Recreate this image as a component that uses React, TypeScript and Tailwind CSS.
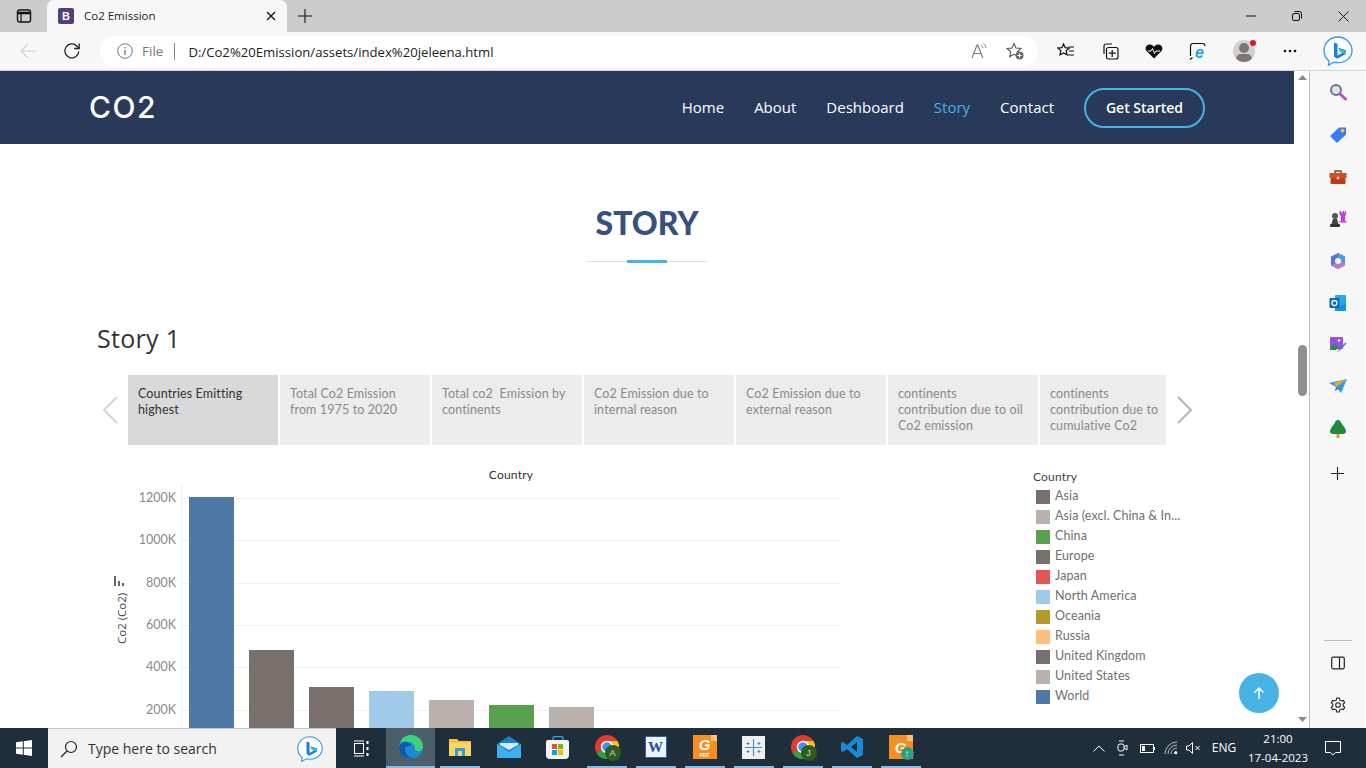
import React from "react";

const sans = "font-['Open_Sans','Liberation_Sans',sans-serif]";
const tableau = "font-['Lato','Open_Sans',sans-serif]";

function Svg({ s = 20, w, h, children, vb }: { s?: number; w?: number; h?: number; children: React.ReactNode; vb?: string }) {
  const W = w ?? s;
  const H = h ?? s;
  return (
    <svg width={W} height={H} viewBox={vb ?? `0 0 ${W} ${H}`} fill="none" className="block shrink-0">
      {children}
    </svg>
  );
}

const BingIcon = ({ s = 32 }: { s?: number }) => (
  <svg width={s} height={s} viewBox="0 0 32 32" fill="none" className="block shrink-0">
    <path d="M16 2C8 2 2 8 2 15.500c0 4.500 2 8 5 10.500L6.500 30l5.500-2.800c1.300.3 2.600.5 4 .5 8 0 14-5.500 14-12.200S24 2 16 2z" fill="#fff" stroke="#2f9be8" strokeWidth="1.300" />
    <path d="M12 7.500l3.500 1.200v11.800l5-2.800-2.500-1.200-1.500-3.700 7.500 2.500v3.500l-8.500 5-3.500-2z" fill="#1c7fe0" />
    <path d="M16.500 13.800l7.500 2.500v3.500l-5-3z" fill="#2bc7d8" />
  </svg>
);

function TabBar() {
  return (
    <div className="h-8 bg-[#cccccc] flex items-end shrink-0">
      <div className="w-[47px] h-8 flex items-center justify-center">
        <Svg s={16}>
          <rect x="1.500" y="2" width="13" height="12" rx="2" stroke="#111" strokeWidth="1.400" />
          <path d="M2 5h12" stroke="#111" strokeWidth="2.500" />
          <path d="M5 5v9" stroke="#111" strokeWidth="1.200" />
        </Svg>
      </div>
      <div className="w-[240px] h-8 bg-[#f7f7f7] rounded-t-[7px] flex items-center pl-[11px] pr-[11px]">
        <div className="w-4 h-4 rounded-[2px] bg-[#563d7c] text-white text-[11px] font-bold leading-4 text-center font-['Liberation_Sans',sans-serif]">B</div>
        <span className={`ml-[10px] text-[11.500px] text-[#222] ${sans}`}>Co2 Emission</span>
        <div className="ml-auto">
          <Svg s={10}>
            <path d="M1 1l8 8M9 1l-8 8" stroke="#111" strokeWidth="1.300" />
          </Svg>
        </div>
      </div>
      <div className="h-8 w-[36px] flex items-center justify-center">
        <Svg s={14}>
          <path d="M7 0v14M0 7h14" stroke="#111" strokeWidth="1.100" />
        </Svg>
      </div>
      <div className="ml-auto flex h-8">
        <div className="w-[46px] flex items-center justify-center">
          <Svg w={10} h={2}>
            <path d="M0 1h10" stroke="#111" />
          </Svg>
        </div>
        <div className="w-[46px] flex items-center justify-center">
          <Svg s={10}>
            <rect x=".5" y="2.500" width="7" height="7" rx="1.500" stroke="#111" />
            <path d="M2.500 .5h5a2 2 0 012 2v5" stroke="#111" />
          </Svg>
        </div>
        <div className="w-[46px] flex items-center justify-center">
          <Svg s={11}>
            <path d="M.5.5l10 10M10.500.5l-10 10" stroke="#111" />
          </Svg>
        </div>
      </div>
    </div>
  );
}

function ToolBar() {
  return (
    <div className="h-[39px] bg-[#f7f7f7] border-b border-[#d4d4d4] flex items-center shrink-0">
      <div className="w-[56px] flex justify-center">
        <Svg w={18} h={16}>
          <path d="M17 8H2M8.500 1.500L2 8l6.500 6.500" stroke="#cfcfcf" strokeWidth="1.200" />
        </Svg>
      </div>
      <div className="w-[32px] flex justify-center">
        <Svg s={18}>
          <path d="M15.800 9.500a7 7 0 11-2-5.500L16 6.200" stroke="#222" strokeWidth="1.300" />
          <path d="M16.200 1.500v5h-5" stroke="#222" strokeWidth="1.300" />
        </Svg>
      </div>
      <div className="ml-[12px] w-[938px] h-[31px] bg-white rounded-full flex items-center pl-[17px] pr-[14px]">
        <Svg s={16}>
          <circle cx="8" cy="8" r="7.300" stroke="#777" strokeWidth="1" />
          <path d="M8 7v5M8 4v1.600" stroke="#777" strokeWidth="1.300" />
        </Svg>
        <span className={`ml-[9px] text-[13.500px] text-[#777] ${sans}`}>File</span>
        <div className="ml-[11px] w-px h-[17px] bg-[#888]" />
        <span className={`ml-[13px] text-[13.150px] leading-[20px] pt-[1px] text-[#222] ${sans}`}>D:/Co2%20Emission/assets/index%20jeleena.html</span>
        <div className="ml-auto flex items-center gap-[19px]">
          <Svg w={16} h={16}>
            <path d="M1 15L6 2h.8l5 13M3 10.500h7" stroke="#777" strokeWidth="1.100" />
            <path d="M10 2a4 4 0 012 3M12.500.5a6 6 0 012.500 4.500" stroke="#777" strokeWidth=".9" />
          </Svg>
          <Svg s={18}>
            <path d="M8 1.500l2 4.500 5 .5-3.700 3.300 1 4.800L8 12.300 3.700 14.600l1-4.800L1 6.500l5-.5z" stroke="#555" strokeWidth="1.100" />
            <circle cx="13.500" cy="13.500" r="4" fill="#666" />
            <path d="M13.500 11.300v4.400M11.300 13.500h4.400" stroke="#fff" />
          </Svg>
        </div>
      </div>
      <div className="ml-[18px] w-[20px] flex justify-center">
        <Svg s={18}>
          <path d="M6.500 2l1.700 3.700 4 .4-3 2.700.9 4L6.500 11 3 12.800l.9-4-3-2.700 4-.4z" stroke="#111" strokeWidth="1.200" />
          <path d="M11.500 5H17M12 9h5M11 13h6" stroke="#111" strokeWidth="1.200" />
        </Svg>
      </div>
      <div className="ml-[24px] w-[20px] flex justify-center">
        <Svg s={18}>
          <path d="M3 12V4a2 2 0 012-2h6" stroke="#111" strokeWidth="1.200" />
          <rect x="5.500" y="5.500" width="11.500" height="11.500" rx="2" stroke="#111" strokeWidth="1.200" />
          <path d="M11.200 8v7M7.800 11.200h7" stroke="#111" strokeWidth="1.200" />
        </Svg>
      </div>
      <div className="ml-[24px] w-[20px] flex justify-center">
        <Svg w={18} h={16}>
          <path d="M9 15.500L1.500 8C-.5 5.500 1 1.500 4.800 1.500 6.800 1.500 8 2.500 9 3.800c1-1.300 2.200-2.300 4.200-2.300C17 1.500 18.500 5.500 16.500 8z" fill="#111" />
          <path d="M3 8h3l1.500-2.500 2 5L11 8h4" stroke="#fff" strokeWidth="1" />
        </Svg>
      </div>
      <div className="ml-[24px] w-[20px] flex justify-center">
        <Svg s={18}>
          <path d="M1.500 14V4a2.500 2.500 0 012.500-2.500h9.500A2.500 2.500 0 0116 4" stroke="#111" strokeWidth="1.200" />
          <path d="M1 17.500l2.500-2" stroke="#111" strokeWidth="1.200" />
          <text x="6" y="16" fontSize="16" fontWeight="700" fontStyle="italic" fill="#1ea7e8" fontFamily="Liberation Sans">e</text>
        </Svg>
      </div>
      <div className="ml-[25px] w-[22px] h-[22px] rounded-full bg-[#d2d0ce] relative overflow-hidden">
        <div className="w-[10px] h-[10px] rounded-full bg-[#7a7775] mx-auto mt-[3px]" />
        <div className="w-[16px] h-[10px] rounded-full bg-[#7a7775] mx-auto mt-[1px]" />
      </div>
      <div className="-ml-[5px] -mt-[16px] w-[6px] h-[6px] rounded-full bg-[#e81123] relative" />
      <div className="ml-[24px] w-[20px] flex justify-center">
        <Svg w={14} h={4}>
          <circle cx="2" cy="2" r="1.300" fill="#111" />
          <circle cx="7" cy="2" r="1.300" fill="#111" />
          <circle cx="12" cy="2" r="1.300" fill="#111" />
        </Svg>
      </div>
      <div className="ml-[22px]">
        <BingIcon s={32} />
      </div>
    </div>
  );
}

function Nav() {
  const items = [
    ["Home", "text-white"],
    ["About", "text-white"],
    ["Deshboard", "text-white"],
    ["Story", "text-[#47b2e4]"],
    ["Contact", "text-white"],
  ];
  return (
    <div className="h-[73px] bg-[#28395a] flex items-center shrink-0 pl-[89px]">
      <span className="text-[30px] font-medium tracking-[1.500px] pb-[2px] text-white font-['Inter',sans-serif] leading-none">CO2</span>
      <div className="ml-auto flex items-center gap-[30px]">
        {items.map(([t, c]) => (
          <span key={t} className={`text-[15px] ${c} ${sans}`}>{t}</span>
        ))}
      </div>
      <div className={`ml-[30px] mr-[89px] w-[121px] h-[40px] rounded-full border-2 border-[#47b2e4] flex items-center justify-center text-white text-[14px] font-semibold ${sans}`}>
        Get Started
      </div>
    </div>
  );
}

const tabs = [
  "Countries Emitting highest",
  "Total Co2 Emission from 1975 to 2020",
  "Total co2  Emission by continents",
  "Co2 Emission due to internal reason",
  "Co2 Emission due to external reason",
  "continents contribution due to oil Co2 emission",
  "continents contribution due to cumulative Co2",
];

function StoryTabs() {
  return (
    <div className="flex items-center mt-[20px] ml-[97px]">
      <div className="w-[31px] flex justify-center pr-[5px]">
        <Svg w={16} h={28}>
          <path d="M15 1L2 14l13 13" stroke="#d5d5d5" strokeWidth="2" />
        </Svg>
      </div>
      <div className="flex gap-[2px] w-[1038px] overflow-hidden">
        {tabs.map((t, i) => (
          <div
            key={t}
            className={`shrink-0 w-[150px] h-[70px] pl-[10px] pr-[10px] pt-[11px] text-[12.500px] leading-[16px] tracking-[0.12px] whitespace-pre-wrap ${tableau} ${
              i === 0 ? "bg-[#d9d9d9] text-[#333]" : "bg-[#ececec] text-[#8a8a8a]"
            }`}
          >
            {t}
          </div>
        ))}
      </div>
      <div className="w-[36px] flex justify-center pl-[2px]">
        <Svg w={16} h={28}>
          <path d="M1 1l13 13L1 27" stroke="#b5b5b5" strokeWidth="2" />
        </Svg>
      </div>
    </div>
  );
}

const gridLines: [number, string][] = [
  [498, "1200K"],
  [540, "1000K"],
  [583, "800K"],
  [625, "600K"],
  [667, "400K"],
  [710, "200K"],
];
const bars: [number, number, string][] = [
  [189, 497, "#4e79a7"],
  [249, 650, "#79706e"],
  [309, 687, "#79706e"],
  [369, 691, "#a0cbe8"],
  [429, 700, "#bab0ac"],
  [489, 705, "#59a14f"],
  [549, 707, "#bab0ac"],
];

function Chart() {
  return (
    <svg width={760} height={263} viewBox="97 465 760 263" className="block shrink-0">
      <text x="511" y="479" textAnchor="middle" fontSize="12" fill="#333" fontFamily="Lato, Open Sans, sans-serif" letterSpacing=".2">Country</text>
      <path d="M181.500 484V728" stroke="#f1f1f1" />
      {gridLines.map(([y, l]) => (
        <g key={l}>
          <path d={`M181 ${y + 0.5}H840`} stroke="#f1f1f1" />
          <text x="176" y={y + 4} textAnchor="end" fontSize="12.500" fill="#8a8a8a" fontFamily="Lato, Open Sans, sans-serif">{l}</text>
        </g>
      ))}
      {bars.map(([x, y, c]) => (
        <rect key={x} x={x} y={y} width="45" height={728 - y} fill={c} />
      ))}
      <text transform="translate(125.500 644) rotate(-90)" fontSize="11.500" fill="#444" fontFamily="Open Sans, sans-serif">Co2 (Co2)</text>
      <path d="M114 576h2v10h-2zM118 581h2v5h-2zM122 583h2v3h-2z" fill="#666" />
    </svg>
  );
}

const legend: [string, string][] = [
  ["Asia", "#79706e"],
  ["Asia (excl. China & In...", "#bab0ac"],
  ["China", "#59a14f"],
  ["Europe", "#79706e"],
  ["Japan", "#e15759"],
  ["North America", "#a0cbe8"],
  ["Oceania", "#b6992d"],
  ["Russia", "#ffbe7d"],
  ["United Kingdom", "#79706e"],
  ["United States", "#bab0ac"],
  ["World", "#4e79a7"],
];

function Legend() {
  return (
    <div className={`ml-[176px] pt-[5px] ${tableau}`}>
      <div className="text-[12px] leading-[14px] tracking-[0.2px] text-[#444] h-[17px]">Country</div>
      {legend.map(([t, c]) => (
        <div key={t} className="flex items-center h-[20px] pl-[3px] text-[12.500px] tracking-[0.1px] text-[#707070] whitespace-nowrap">
          <span className="w-[14px] h-[14px] mr-[5px]" style={{ backgroundColor: c }} />
          <span className="pb-[1px]">{t}</span>
        </div>
      ))}
    </div>
  );
}

function Scrollbar() {
  return (
    <div className="w-4 bg-white flex flex-col items-center shrink-0 border-r-0">
      <div className="h-[10px] mt-[1px] flex items-center">
        <Svg w={9} h={5}>
          <path d="M0 5l4.500-5L9 5z" fill="#8a8a8a" />
        </Svg>
      </div>
      <div className="w-[9px] h-[51px] rounded-full bg-[#8f8f8f] mt-[263px]" />
      <div className="mt-auto mb-[6px]">
        <Svg w={9} h={5}>
          <path d="M0 0l4.500 5L9 0z" fill="#8a8a8a" />
        </Svg>
      </div>
    </div>
  );
}

function SideCell({ h, children }: { h: string; children: React.ReactNode }) {
  return <div className={`${h} flex items-center justify-center w-full shrink-0`}>{children}</div>;
}

function Sidebar() {
  return (
    <div className="w-[56px] bg-[#f7f7f7] border-l border-[#bdbdbd] flex flex-col items-center shrink-0 -ml-px">
      <SideCell h="h-[42px]">
        <Svg s={18}>
          <circle cx="7" cy="7" r="5" fill="#dbe4ea" stroke="#6b7780" strokeWidth="2" />
          <path d="M11 11l5.500 5" stroke="#c040e0" strokeWidth="2.800" strokeLinecap="round" />
        </Svg>
      </SideCell>
      <SideCell h="h-[43px]">
        <Svg s={18}>
          <path d="M1 10L10 1.500h7v7L8 17z" fill="#3d7df0" />
          <circle cx="13.500" cy="4.800" r="1.800" fill="#f5c342" />
        </Svg>
      </SideCell>
      <SideCell h="h-[43px]">
        <Svg s={18}>
          <path d="M6 4V2h6v2" stroke="#7c4a35" strokeWidth="1.500" />
          <rect x="0.500" y="4" width="17" height="5" fill="#d1501f" />
          <rect x="1.500" y="9" width="15" height="6" rx="1" fill="#b83e17" />
          <circle cx="9" cy="9" r="1.500" fill="#d8c9bf" />
        </Svg>
      </SideCell>
      <SideCell h="h-[40px]">
        <Svg s={18}>
          <circle cx="6" cy="6" r="3" fill="#555" />
          <path d="M4 9h4l1.500 5h-7z" fill="#444" />
          <rect x="1" y="14" width="10" height="3" rx="1" fill="#333" />
          <path d="M10.500 1h1.500v1.500h1.500V1h1.500v1.500h1V1H17v4l-1 1v5h1.500v1.500h-7V11H12V6l-1.500-1z" fill="#c23cf0" />
        </Svg>
      </SideCell>
      <SideCell h="h-[43px]">
        <Svg s={18}>
          <path d="M9 1l7 3.500v9L9 17l-7-3.500v-9z" fill="#5e74d8" />
          <path d="M9 1l7 3.500v4l-4 .5A3.500 3.500 0 009 5.500z" fill="#3ba7e0" />
          <path d="M2 13.500L9 17l7-3.500v-3l-4-1.500A3.500 3.500 0 016 11z" fill="#b87ad8" />
          <circle cx="9" cy="9" r="3" fill="#f7f7f7" />
        </Svg>
      </SideCell>
      <SideCell h="h-[42px]">
        <Svg s={18}>
          <rect x="6" y="1" width="11" height="16" rx="1" fill="#28a8ea" />
          <path d="M6 9l5.500 3.500L17 9v7a1 1 0 01-1 1H6z" fill="#1490df" />
          <rect x="0.500" y="4" width="10" height="10" rx="1" fill="#0a64c0" />
          <circle cx="5.500" cy="9" r="2.500" stroke="#fff" strokeWidth="1.300" />
        </Svg>
      </SideCell>
      <SideCell h="h-[41px]">
        <Svg s={18}>
          <rect x="1" y="1" width="13" height="12" rx="1" fill="#9a4fe0" />
          <path d="M1 12l5-5 4 4-3 3H1z" fill="#2e8b57" />
          <circle cx="10" cy="4.500" r="1.300" fill="#fff" />
          <path d="M9 14l7.500-7.500 1 1L10 15z" fill="#3e6fe8" />
          <path d="M7.500 16.500L9 14l1 1z" fill="#e8a520" />
        </Svg>
      </SideCell>
      <SideCell h="h-[42px]">
        <Svg w={18} h={16}>
          <path d="M0 5l18-4-6 14-5-6z" fill="#2f9be8" />
          <path d="M7 9L18 1 5 5z" fill="#f4a82a" />
          <path d="M7 9l-1 4 3-2z" fill="#1c6fc0" />
        </Svg>
      </SideCell>
      <SideCell h="h-[43px]">
        <Svg s={18}>
          <path d="M9 0c2 0 3 2 3.500 3.500C14.500 6 17 9 17 11.500c0 1.500-1.500 2.500-3 2.500H4c-1.500 0-3-1-3-2.500C1 9 3.500 6 5.500 3.500 6 2 7 0 9 0z" fill="#1f8a3a" />
          <rect x="7.500" y="14" width="3" height="4" fill="#e89a1c" />
        </Svg>
      </SideCell>
      <SideCell h="h-[47px]">
        <Svg s={13}>
          <path d="M6.500 0v13M0 6.500h13" stroke="#222" strokeWidth="1.100" />
        </Svg>
      </SideCell>
      <div className="mt-auto w-[28px] h-px bg-[#bdbdbd]" />
      <SideCell h="h-[43px]">
        <Svg s={14}>
          <rect x=".7" y="1.200" width="12.600" height="11.600" rx="1.500" stroke="#222" strokeWidth="1.200" />
          <path d="M8.500 1.500v11" stroke="#222" strokeWidth="1.200" />
        </Svg>
      </SideCell>
      <SideCell h="h-[42px]">
        <Svg s={16}>
          <circle cx="8" cy="8" r="2.300" stroke="#222" strokeWidth="1.100" />
          <path d="M6.700 1h2.600l.4 2 1.700 1 2-.6 1.300 2.200-1.500 1.400v2l1.500 1.400-1.300 2.200-2-.6-1.700 1-.4 2H6.700l-.4-2-1.700-1-2 .6L1.300 10.400l1.500-1.400v-2L1.300 5.600l1.300-2.200 2 .6 1.700-1z" stroke="#222" strokeWidth="1.100" />
        </Svg>
      </SideCell>
      <div className="h-[2px]" />
    </div>
  );
}

function TaskCell({ children, bar = true, active = false }: { children: React.ReactNode; bar?: boolean; active?: boolean }) {
  return (
    <div className={`w-[49px] h-10 flex flex-col items-center shrink-0 ${active ? "bg-[#4a5f6a]" : ""}`}>
      <div className="flex-1 flex items-center justify-center">{children}</div>
      <div className={`h-[2px] ${bar ? (active ? "w-full bg-[#86bde3]" : "w-[40px] bg-[#86bde3]") : ""}`} />
    </div>
  );
}

const ChromeIcon = ({ letter }: { letter: string }) => (
  <div className="relative w-[24px] h-[25px]">
    <Svg s={24}>
      <circle cx="12" cy="12" r="12" fill="#e33b2e" />
      <path d="M12 12L1.600 18A12 12 0 0012 24l5-7z" fill="#2f9e44" />
      <path d="M12 6h10.400A12 12 0 0112 24l5.200-9z" fill="#fbc02d" />
      <circle cx="12" cy="12" r="5.500" fill="#4a8df0" stroke="#fff" strokeWidth="1.500" />
    </Svg>
    <div className="absolute left-[10px] top-[10px] w-[16px] h-[16px] rounded-full bg-[#2c5c1e] text-[#d6e6cf] text-[9px] leading-[16px] text-center font-['Liberation_Sans',sans-serif]">{letter}</div>
  </div>
);

const FoxitIcon = ({ pdf, up }: { pdf?: boolean; up?: boolean }) => (
  <div className="relative w-[24px] h-[24px] bg-[#f78f1e] flex flex-col items-center justify-center">
    <span className="text-white font-bold italic text-[15px] leading-[15px] font-['Liberation_Sans',sans-serif]">G</span>
    {pdf && <span className="text-white font-bold text-[5px] leading-[6px] font-['Liberation_Sans',sans-serif]">PDF</span>}
    <div className="absolute right-0 top-0 w-0 h-0 border-l-[6px] border-b-[6px] border-l-[#fbc27f] border-b-[#fbc27f] border-t-0 border-r-0 bg-[#1e2f3b]" />
    {up && (
      <div className="absolute -right-px -bottom-px w-[13px] h-[13px] rounded-full bg-[#2f9e84] text-white text-[10px] leading-[13px] text-center font-bold font-['Liberation_Sans',sans-serif]">↑</div>
    )}
  </div>
);

function Taskbar() {
  return (
    <div className="h-10 bg-[#1e2f3b] flex items-stretch shrink-0">
      <div className="w-[48px] flex items-center justify-center">
        <Svg s={16}>
          <path d="M0 2.300l6.800-1v6.300H0zM7.800 1.200L16 0v7.600H7.800zM0 8.500h6.800v6.300l-6.800-1zM7.800 8.500H16V16l-8.200-1.200z" fill="#fff" />
        </Svg>
      </div>
      <div className="w-[288px] bg-[#f2f2f2] border-t border-[#c8c8c8] flex items-center pl-[12px] pr-[12px]">
        <Svg s={18}>
          <circle cx="11" cy="7" r="5.500" stroke="#222" strokeWidth="1.200" />
          <path d="M7 11l-6 6" stroke="#222" strokeWidth="1.300" />
        </Svg>
        <span className={`ml-[10px] text-[14px] text-[#333] ${sans}`}>Type here to search</span>
        <div className="ml-auto">
          <BingIcon s={28} />
        </div>
      </div>
      <div className="w-[50px] flex items-center justify-center">
        <Svg s={17}>
          <path d="M1 1h10M1 16h10" stroke="#fff" />
          <rect x="1.500" y="3.500" width="9" height="10" stroke="#fff" />
          <path d="M14.500 1v3M14.500 7v3M14.500 13v3" stroke="#fff" strokeWidth="2" />
        </Svg>
      </div>
      <TaskCell active>
        <Svg s={24}>
          <circle cx="12" cy="12" r="12" fill="#1b8ad0" />
          <path d="M1 8C3 2 8 0 12 0c7 0 12 5 12 12 0 3-3 5-6 4-3-1-2-4-3-6-2-3-8-5-14-2z" fill="#3bd17d" />
          <path d="M6 14c0 5 4 9 9 9-6 2-15-2-15-10 0-3 3-6 6-6 3 0 6 2 6 4-3 0-6 0-6 3z" fill="#0f5aa8" />
        </Svg>
      </TaskCell>
      <TaskCell>
        <Svg w={22} h={20}>
          <path d="M0 2h8l2 2h12v15H0z" fill="#f5c242" />
          <rect x="0" y="6" width="22" height="13" fill="#fbd667" />
          <rect x="6" y="11" width="10" height="8" fill="#2d9fe0" />
          <rect x="9" y="14" width="4" height="5" fill="#fbd667" />
        </Svg>
      </TaskCell>
      <TaskCell bar={false}>
        <Svg w={24} h={22}>
          <path d="M0 8L12 0l12 8v14H0z" fill="#1b7fd0" />
          <path d="M0 8l12 8 12-8v14H0z" fill="#3db1f0" />
          <path d="M3 7h18v2l-9 5-9-5z" fill="#d6eefb" />
        </Svg>
      </TaskCell>
      <TaskCell bar={false}>
        <div className="flex flex-col items-center">
          <Svg w={14} h={4}>
            <path d="M2 4V2a1.500 1.500 0 011.500-1.500h7A1.500 1.500 0 0112 2v2" stroke="#2ea7e0" strokeWidth="1.300" />
          </Svg>
          <div className="w-[23px] h-[19px] bg-[#f4f4f4] rounded-b-[4px] rounded-t-[2px] grid grid-cols-2 gap-px px-[6px] py-[4px]">
            <span className="bg-[#f25022]" />
            <span className="bg-[#7fba00]" />
            <span className="bg-[#00a4ef]" />
            <span className="bg-[#ffb900]" />
          </div>
        </div>
      </TaskCell>
      <TaskCell><ChromeIcon letter="A" /></TaskCell>
      <TaskCell>
        <div className="w-[22px] h-[22px] bg-[#f0f4fa] border border-[#2e5fb0] flex items-center justify-center text-[#1f4fa8] font-bold text-[15px] font-['Liberation_Serif',serif]">W</div>
      </TaskCell>
      <TaskCell><FoxitIcon pdf /></TaskCell>
      <TaskCell>
        <div className="w-[23px] h-[23px] bg-[#eef0f2] flex items-center justify-center">
          <Svg s={17}>
            <path d="M8.500 0v17M0 8.500h17M3 3l0 3M14 3v3M3 11v3M14 11v3M1.500 4.500h3M12.500 4.500h3M1.500 12.500h3M12.500 12.500h3" stroke="#4a8bbf" strokeWidth="1.100" />
          </Svg>
        </div>
      </TaskCell>
      <TaskCell><ChromeIcon letter="J" /></TaskCell>
      <TaskCell>
        <Svg s={24}>
          <path d="M17 1l6 3v16l-6 3-10-9-4 3-2-1V8l2-1 4 3z" fill="#1b8ad6" />
          <path d="M17 7l-6 5 6 5z" fill="#1e2f3b" />
        </Svg>
      </TaskCell>
      <TaskCell><FoxitIcon up /></TaskCell>
      <div className="ml-auto flex items-center text-white">
        <div className="w-[24px] flex justify-center">
          <Svg w={12} h={7}>
            <path d="M.5 6.500L6 1l5.500 5.500" stroke="#fff" />
          </Svg>
        </div>
        <div className="w-[24px] flex justify-center">
          <Svg w={12} h={16}>
            <rect x="1" y="4" width="6" height="7" rx="2" stroke="#fff" />
            <path d="M7 7l3-2v5l-3-2M2 1h5M2 15h5" stroke="#fff" />
          </Svg>
        </div>
        <div className="w-[25px] flex justify-center">
          <Svg w={15} h={9}>
            <rect x=".5" y=".5" width="13" height="8" stroke="#fff" />
            <rect x="2" y="2" width="3" height="5" fill="#fff" />
            <path d="M14.500 3v3" stroke="#fff" />
          </Svg>
        </div>
        <div className="w-[22px] flex justify-center">
          <Svg s={14}>
            <path d="M1 13A12 12 0 0113 1M4 13a9 9 0 019-9M7 13a6 6 0 016-6M10 13a3 3 0 013-3" stroke="#ddd" strokeWidth=".8" />
            <circle cx="12" cy="12" r="1.300" fill="#fff" />
          </Svg>
        </div>
        <div className="w-[23px] flex justify-center">
          <Svg w={15} h={12}>
            <path d="M.5 4h2.500L6.500.5v11L3 8H.5z" stroke="#fff" />
            <path d="M9.500 4l4 4M13.500 4l-4 4" stroke="#fff" />
          </Svg>
        </div>
        <span className={`w-[38px] text-center text-[12px] ${sans}`}>ENG</span>
        <div className={`w-[60px] ml-[5px] text-center text-[11.500px] leading-[19px] whitespace-nowrap ${sans}`}>
          <div>21:00</div>
          <div>17-04-2023</div>
        </div>
        <div className="w-[58px] flex justify-center pr-[8px]">
          <Svg w={16} h={15}>
            <path d="M.5.5h15v11h-5L8 14l-2.500-2.500h-5z" stroke="#fff" />
          </Svg>
        </div>
      </div>
    </div>
  );
}

export default function App() {
  return (
    <div className="w-[1366px] h-[768px] overflow-hidden flex flex-col bg-white">
      <TabBar />
      <ToolBar />
      <div className="flex-1 flex min-h-0">
        <div className="w-[1294px] relative overflow-hidden flex flex-col shrink-0">
          <Nav />
          <div className="flex-1 min-h-0 overflow-hidden">
            <h2 className="mt-[60px] text-center text-[32px] leading-[38px] font-black text-[#37517e] font-['Lato',sans-serif]">STORY</h2>
            <div className="mt-[18px] mx-auto w-[120px] h-[3px] flex items-center justify-center relative">
              <div className="w-full h-px bg-[#dddddd]" />
              <div className="absolute w-[40px] h-[3px] bg-[#47b2e4]" />
            </div>
            <div className="mt-[58px] ml-[97px] text-[25px] leading-[34px] tracking-[0.3px] text-[#333] font-['Open_Sans',sans-serif]">Story 1</div>
            <StoryTabs />
            <div className="flex mt-[20px] ml-[97px]">
              <Chart />
              <Legend />
            </div>
          </div>
          <div className="absolute right-[15px] bottom-[15px] w-10 h-10 rounded-full bg-[#47b2e4] flex items-center justify-center">
            <Svg s={14}>
              <path d="M7 13V2M2.500 6.500L7 2l4.500 4.500" stroke="#fff" strokeWidth="1.500" />
            </Svg>
          </div>
        </div>
        <Scrollbar />
        <Sidebar />
      </div>
      <Taskbar />
    </div>
  );
}
